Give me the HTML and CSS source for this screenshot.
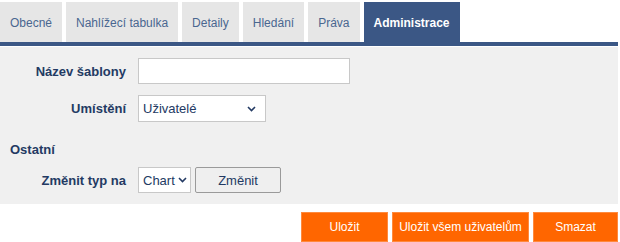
FILE: index.html
```html
<!DOCTYPE html>
<html lang="cs">
<head>
<meta charset="utf-8">
<title>Administrace</title>
<link rel="stylesheet" href="styles.css">
</head>
<body>
<div class="page">
  <nav class="tabs">
    <a class="tab">Obecné</a>
    <a class="tab">Nahlížecí tabulka</a>
    <a class="tab">Detaily</a>
    <a class="tab">Hledání</a>
    <a class="tab">Práva</a>
    <a class="tab tab-active">Administrace</a>
  </nav>
  <div class="panel">
    <div class="form-row">
      <label class="lbl">Název šablony</label>
      <input class="text-input" type="text">
    </div>
    <div class="form-row">
      <label class="lbl">Umístění</label>
      <span class="sel-wrap sel-wide">
        <select class="sel"><option>Uživatelé</option></select>
        <svg class="chev" width="9" height="6" viewBox="0 0 9 6"><path d="M1 1 L4.5 4.5 L8 1" fill="none" stroke="#233a63" stroke-width="1.6"/></svg>
      </span>
    </div>
    <div class="section">Ostatní</div>
    <div class="form-row">
      <label class="lbl">Změnit typ na</label>
      <span class="sel-wrap sel-small">
        <select class="sel"><option>Chart</option></select>
        <svg class="chev chev-small" width="9" height="6" viewBox="0 0 9 6"><path d="M1 1 L4.5 4.5 L8 1" fill="none" stroke="#233a63" stroke-width="1.6"/></svg>
      </span>
      <button class="btn-gray">Změnit</button>
    </div>
  </div>
  <div class="actions">
    <button class="btn-orange btn-save">Uložit</button>
    <button class="btn-orange btn-all">Uložit všem uživatelům</button>
    <button class="btn-orange btn-del">Smazat</button>
  </div>
</div>
</body>
</html>
```
FILE: styles.css
```css
* { box-sizing: border-box; }
body {
  margin: 0;
  background: #fff;
  font-family: "Liberation Sans", Arial, sans-serif;
  font-size: 12px;
  color: #233a63;
}
.page { width: 618px; }
.tabs {
  display: flex;
  gap: 4px;
  padding-top: 2px;
  border-bottom: 4px solid #3b5785;
}
.tab {
  display: block;
  height: 40px;
  line-height: 37px;
  padding: 3px 10px 0 10px;
  background: #e6e6e6;
  color: #4a6790;
  font-size: 12px;
}
.tab-active {
  background: #3b5785;
  color: #fff;
  font-weight: bold;
  padding: 3px 10px 0 10px;
}
.panel {
  background: #f0f0f0;
  margin-top: 1px;
  padding: 11px 0 11px 0;
}
.form-row {
  display: flex;
  align-items: center;
  margin-bottom: 11px;
}
.form-row:last-child { margin-bottom: 0; }
.lbl {
  width: 126px;
  text-align: right;
  margin-right: 12px;
  font-weight: bold;
  font-size: 13px;
  color: #233a63;
}
.text-input {
  width: 212px;
  height: 26px;
  border: 1px solid #c8c8c8;
  background: #fff;
  margin: 0;
}
.sel-wrap {
  position: relative;
  display: block;
}
.sel {
  display: block;
  width: 100%;
  height: 100%;
  -webkit-appearance: none;
  appearance: none;
  border: 1px solid #c8c8c8;
  background: #fff;
  font-family: "Liberation Sans", Arial, sans-serif;
  font-size: 13px;
  color: #233a63;
  margin: 0;
  border-radius: 0;
  padding: 0 0 0 4px;
}
.chev {
  position: absolute;
  right: 10px;
  top: 11px;
  pointer-events: none;
}
.chev-small { right: 4px; top: 10px; }
.sel-wide { width: 128px; height: 27px; }
.sel-small { width: 53px; height: 26px; }
.section {
  padding-left: 10px;
  margin-top: 20px;
  margin-bottom: 9px;
  line-height: 16px;
  font-weight: bold;
  font-size: 13px;
  color: #233a63;
}
.btn-gray {
  margin-left: 4px;
  width: 86px;
  height: 26px;
  border: 1px solid #9a9a9a;
  border-radius: 2px;
  background: #efefef;
  font-family: "Liberation Sans", Arial, sans-serif;
  font-size: 13px;
  color: #233a63;
}
.actions {
  display: flex;
  justify-content: flex-end;
  gap: 4px;
  margin-top: 8px;
}
.btn-orange {
  height: 30px;
  border: 1px solid #ff8a3d;
  background: #ff6600;
  color: #fff;
  font-family: "Liberation Sans", Arial, sans-serif;
  font-size: 12px;
  padding: 0 4px;
  white-space: nowrap;
}
.btn-save { width: 87px; }
.btn-all { width: 137px; }
.btn-del { width: 85px; }
```
